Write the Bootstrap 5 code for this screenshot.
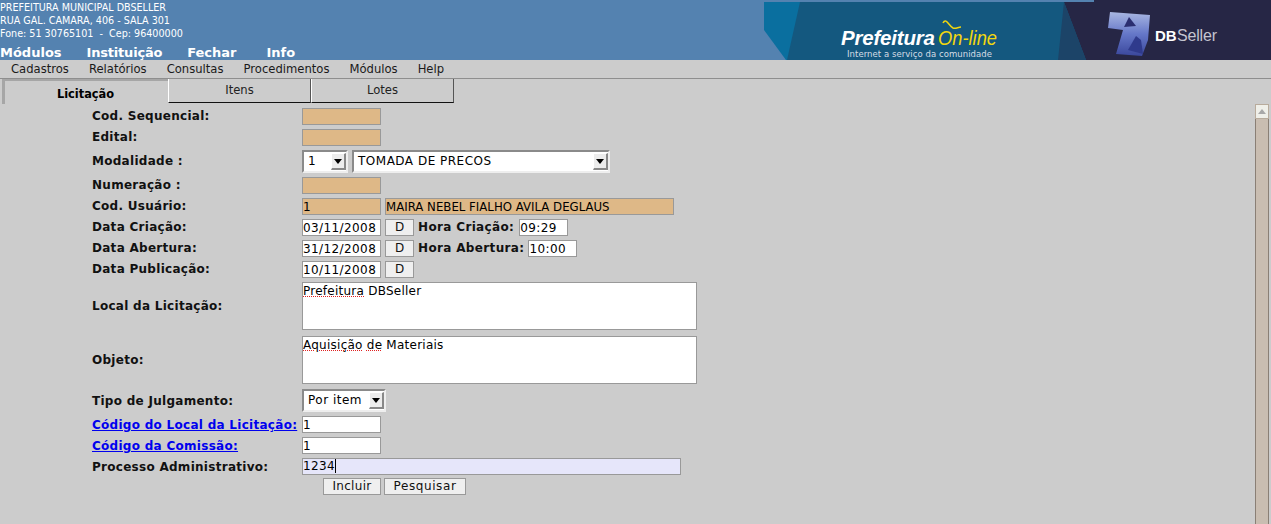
<!DOCTYPE html>
<html lang="pt-BR">
<head>
    <meta charset="UTF-8" />
    <meta name="viewport" content="width=device-width, initial-scale=1.0" />
    <title>Licitação</title>
    <link href="https://cdn.jsdelivr.net/npm/bootstrap@5.3.0/dist/css/bootstrap.min.css" rel="stylesheet" />
    <style>
        html, body { height: 524px; overflow: hidden; }
        body { background: #cccccc; color: #000; font-family: "DejaVu Sans", sans-serif; font-size: 11.6px; line-height: 1.2; }
        .topo { height: 60px; background: #5482b0; color: #fff; }
        .topo-end { font-size: 9.6px; line-height: 13px; padding-top: 1px; height: 45px; white-space: pre; }
        .topo-menu { font-size: 13px; font-weight: 700; line-height: 15px; gap: 25px; }
        .topo-menu span:nth-child(2) { letter-spacing: -.2px; }
        .topo-menu span:last-child { margin-left: 5px; }
        .topo-banner { width: 507px; height: 60px; flex: none; display: block; }
        .barra-menu { height: 19px; background: #cccccc; border-bottom: 1px solid #8e8e8e; padding-left: 11px; gap: 20px; line-height: 18px; color: #1a1a1a; }
        .abas { height: 25px; padding-left: 2px; }
        .aba-ativa { width: 166px; height: 25px; font-size: 11.4px; font-weight: 700; text-align: center; line-height: 26px; border-left: 3px solid #a6a6a6; border-top: 2px solid #a6a6a6; box-sizing: border-box; padding-right: 2px; }
        .aba { width: 143px; height: 24px; border-left: 1px solid #fff; border-right: 1px solid #555; border-bottom: 1px solid #111; text-align: center; line-height: 22px; box-sizing: border-box; color: #222; }
        .conteudo { padding: 4px 0 0 92px; }
        .linha { display: flex; align-items: center; min-height: 17px; margin-bottom: 4px; }
        .linha-area { margin-bottom: 6px; }
        .linha-area + .linha-area { margin-bottom: 5px; }
        .rotulo { width: 210px; flex: none; font-weight: 700; font-size: 12px; letter-spacing: .28px; color: #111; white-space: nowrap; }
        .rotulo a { color: #0000ee; }
        .rotulo-baixo { padding-top: 1px; }
        .campo { height: 17px; width: 79px; border: 1px solid #999; background: #fff; padding: 0; font: 11.75px/15px "DejaVu Sans", sans-serif; color: #000; border-radius: 0; outline: 0; display: block; }
        .digitos { font-size: 12px; letter-spacing: .4px; }
        .campo-bege { background: #deb887; }
        .campo-nome { width: 289px; margin-left: 4px; }
        .campo-hora { width: 49px; margin-left: 5px; }
        .campo-hora-2 { margin-left: 4px; }
        .campo-lilas { width: 379px; background: #e6e6fa; }
        .botao { height: 17px; border: 1px solid #999; background: #efefef; color: #111; font: 12px/15px "DejaVu Sans", sans-serif; padding: 0; border-radius: 0; }
        .botao-d { width: 29px; margin-left: 4px; }
        .rotulo-hora { font-weight: 700; font-size: 12px; letter-spacing: .35px; margin-left: 4px; color: #111; }
        .selecao { height: 23px; background: #fff; position: relative; border-top: 2px solid #8a8a8a; border-left: 2px solid #8a8a8a; border-right: 2px solid #eee; border-bottom: 2px solid #eee; padding-left: 4px; padding-bottom: 1px; font-size: 12px; letter-spacing: .5px; display: flex; align-items: center; }
        .sel-curta { width: 46px; }
        .sel-longa { width: 258px; }
        .sel-tipo { width: 84px; padding-bottom: 0; }
        .seta { position: absolute; right: 0; top: 1px; width: 15px; height: 17px; background: #ececec; border-right: 2px solid #888; border-bottom: 2px solid #888; border-top: 1px solid #fff; border-left: 1px solid #fff; display: flex; align-items: center; justify-content: center; }
        .seta i { width: 0; height: 0; border-left: 4px solid transparent; border-right: 4px solid transparent; border-top: 5px solid #000; display: block; }
        .area { width: 395px; height: 48px; background: #fff; border: 1px solid #999; padding: 1px 0 0; font-size: 12px; letter-spacing: .25px; line-height: 15px; }
        .area span { text-decoration: underline dotted #e02020; }
        .cursor { display: inline-block; width: 1px; height: 14px; background: #000; vertical-align: -3px; }
        .acoes { padding-left: 231px; gap: 3px; margin-top: -1px; }
        .acoes .botao { letter-spacing: .3px; }
        .bt-incluir { width: 58px; }
        .bt-pesquisar { width: 82px; letter-spacing: .6px !important; }
        .rolagem { position: absolute; right: 2px; top: 104px; width: 14px; bottom: 0; background: #c9bdb1; border-left: 1px solid #8a7f75; border-right: 1px solid #8a7f75; }
        .rolagem-btn { height: 15px; background: #efefe9; border: 1px solid #b8ab9c; margin: 0 -1px; display: flex; align-items: center; justify-content: center; }
        .rolagem-btn i { width: 0; height: 0; border-left: 4px solid transparent; border-right: 4px solid transparent; border-bottom: 5px solid #a8a8a8; display: block; }
    </style>
</head>
<body>
    <header class="topo d-flex justify-content-between">
        <div>
            <div class="topo-end">PREFEITURA MUNICIPAL DBSELLER
RUA GAL. CAMARA, 406 - SALA 301
Fone: 51 30765101  -  Cep: 96400000</div>
            <div class="topo-menu d-flex"><span>Módulos</span><span>Instituição</span><span>Fechar</span><span>Info</span></div>
        </div>
        <svg class="topo-banner" viewBox="0 0 507 60">
            <defs>
                <linearGradient id="cubo" x1="0" y1="0" x2="0" y2="1">
                    <stop offset="0" stop-color="#a9b7e2"/>
                    <stop offset=".5" stop-color="#6577c8"/>
                    <stop offset="1" stop-color="#3a479c"/>
                </linearGradient>
            </defs>
            <rect width="507" height="60" fill="#262645"/>
            <rect width="330" height="2" fill="#5482b0"/>
            <polygon points="0,2 300,2 322,60 0,60" fill="#14587f"/>
            <polygon points="0,2 36,2 23,60 0,60" fill="#0a6f9f"/>
            <polygon points="0,30 22,60 0,60" fill="#5482b0"/>
            <polygon points="300,2 322,60 294,60" fill="#1c4468"/>
            <text x="77" y="45" fill="#fff" font-family="Liberation Sans" font-weight="700" font-style="italic" font-size="20.5" textLength="94">Prefeitura</text>
            <text x="174" y="45" fill="#f2d70e" font-family="Liberation Sans" font-style="italic" font-size="21" textLength="59" lengthAdjust="spacingAndGlyphs">On-line</text>
            <path d="M179 23c3-6 6 3 10 5 3 1 5-1 8-1" fill="none" stroke="#f2d70e" stroke-width="1.5"/>
            <text x="83" y="57" fill="#d5dde5" font-family="DejaVu Sans" font-size="8.5" textLength="145">Internet a serviço da comunidade</text>
            <polygon points="346,12 386,15 384,40 378,56 352,54 359,30 344,28" fill="url(#cubo)"/>
            <polygon points="365,17 372,26 360,27" fill="#2b2e70"/>
            <path d="M364 50l8-14 5 4 2 14z" fill="#2f3a8c"/>
            <text x="391" y="41" fill="#fff" font-family="Liberation Sans" font-weight="700" font-size="15">DB</text>
            <text x="413" y="41" fill="#c4c4d0" font-family="Liberation Sans" font-size="16" textLength="40">Seller</text>
        </svg>
    </header>

    <nav class="barra-menu d-flex">
        <span>Cadastros</span><span>Relatórios</span><span>Consultas</span><span>Procedimentos</span><span>Módulos</span><span>Help</span>
    </nav>

    <div class="abas d-flex">
        <div class="aba-ativa">Licitação</div>
        <div class="aba">Itens</div>
        <div class="aba">Lotes</div>
    </div>

    <form class="conteudo">
        <div class="linha"><label class="rotulo">Cod. Sequencial:</label><input class="campo campo-bege" type="text" /></div>
        <div class="linha"><label class="rotulo">Edital:</label><input class="campo campo-bege" type="text" /></div>
        <div class="linha">
            <label class="rotulo">Modalidade :</label>
            <div class="selecao sel-curta">1<span class="seta"><i></i></span></div>
            <div class="selecao sel-longa ms-1">TOMADA DE PRECOS<span class="seta"><i></i></span></div>
        </div>
        <div class="linha"><label class="rotulo">Numeração :</label><input class="campo campo-bege" type="text" /></div>
        <div class="linha"><label class="rotulo">Cod. Usuário:</label><input class="campo campo-bege digitos" type="text" value="1" /><input class="campo campo-bege campo-nome" type="text" value="MAIRA NEBEL FIALHO AVILA DEGLAUS" /></div>
        <div class="linha"><label class="rotulo">Data Criação:</label><input class="campo digitos" type="text" value="03/11/2008" /><button class="botao botao-d" type="button">D</button><span class="rotulo-hora">Hora Criação:</span><input class="campo digitos campo-hora" type="text" value="09:29" /></div>
        <div class="linha"><label class="rotulo">Data Abertura:</label><input class="campo digitos" type="text" value="31/12/2008" /><button class="botao botao-d" type="button">D</button><span class="rotulo-hora">Hora Abertura:</span><input class="campo digitos campo-hora campo-hora-2" type="text" value="10:00" /></div>
        <div class="linha"><label class="rotulo">Data Publicação:</label><input class="campo digitos" type="text" value="10/11/2008" /><button class="botao botao-d" type="button">D</button></div>
        <div class="linha linha-area"><label class="rotulo">Local da Licitação:</label><div class="area"><span>Prefeitura</span> DBSeller</div></div>
        <div class="linha linha-area"><label class="rotulo">Objeto:</label><div class="area"><span>Aquisição</span> <span>de</span> Materiais</div></div>
        <div class="linha">
            <label class="rotulo rotulo-baixo">Tipo de Julgamento:</label>
            <div class="selecao sel-tipo">Por item<span class="seta"><i></i></span></div>
        </div>
        <div class="linha"><label class="rotulo rotulo-baixo"><a href="#">Código do Local da Licitação:</a></label><input class="campo digitos" type="text" value="1" /></div>
        <div class="linha"><label class="rotulo rotulo-baixo"><a href="#">Código da Comissão:</a></label><input class="campo digitos" type="text" value="1" /></div>
        <div class="linha"><label class="rotulo rotulo-baixo">Processo Administrativo:</label><div class="campo digitos campo-lilas">1234<span class="cursor"></span></div></div>
        <div class="acoes d-flex"><button class="botao bt-incluir" type="button">Incluir</button><button class="botao bt-pesquisar" type="button">Pesquisar</button></div>
    </form>

    <div class="rolagem"><div class="rolagem-btn"><i></i></div></div>
</body>
</html>
